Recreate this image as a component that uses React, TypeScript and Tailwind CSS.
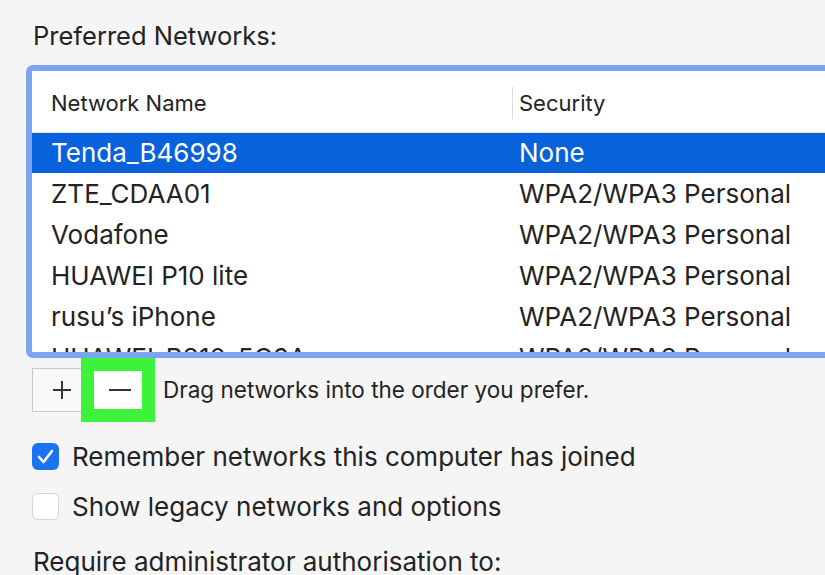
const networks = [
  { name: 'ZTE_CDAA01', security: 'WPA2/WPA3 Personal' },
  { name: 'Vodafone', security: 'WPA2/WPA3 Personal' },
  { name: 'HUAWEI P10 lite', security: 'WPA2/WPA3 Personal' },
  { name: 'rusu’s iPhone', security: 'WPA2/WPA3 Personal' },
  { name: 'HUAWEI-B310-5C6A', security: 'WPA2/WPA3 Personal' },
];

export default function App() {
  return (
    <div className="w-[825px] h-[575px] overflow-hidden bg-[#f5f5f5] text-[#232323] font-['Inter','Liberation_Sans',sans-serif]">
      <div className="pl-[33px] pt-[21px] h-[65px] text-[25.5px] leading-[30px]">Preferred Networks:</div>

      {/* network list */}
      <div className="ml-[26px] w-[840px] h-[293px] border-[6px] border-[#7ba6ef] rounded-[7px] bg-white overflow-hidden">
        <div className="h-[62px] flex items-center border-b border-[#dfe6f2] text-[22px] leading-[28px] pt-[3px]">
          <div className="w-[480px] pl-[19px]">Network Name</div>
          <div className="h-[32px] w-px bg-[#dcdcdc]" />
          <div className="pl-[6px]">Security</div>
        </div>
        <div className="h-[40px] flex items-center bg-[#0862dc] text-white text-[26px] leading-[32px]">
          <div className="w-[487px] pl-[19px]">Tenda_B46998</div>
          <div>None</div>
        </div>
        {networks.map((n) => (
          <div key={n.name} className="h-[41px] flex items-center text-[26px] leading-[32px] pt-[1px]">
            <div className="w-[487px] pl-[19px]">{n.name}</div>
            <div>{n.security}</div>
          </div>
        ))}
      </div>

      {/* add / remove */}
      <div className="flex items-center h-[64px]">
        <div className="ml-[32px] w-[60px] h-[44px] border border-[#c9c9c9] bg-[#f9f9f9] flex items-center pl-[19px]">
          <svg width="20" height="20" viewBox="0 0 20 20">
            <path d="M10 1v18M1 10h18" stroke="#333" strokeWidth="2" />
          </svg>
        </div>
        <div className="relative z-10 ml-[-11px] w-[74px] h-[64px] border-[13px] border-[#3cf23a] bg-white flex items-center justify-center">
          <svg width="22" height="4" viewBox="0 0 22 4" className="ml-[4px]">
            <path d="M0 2h22" stroke="#333" strokeWidth="2" />
          </svg>
        </div>
        <div className="ml-[8px] text-[22.5px] leading-[28px]">Drag networks into the order you prefer.</div>
      </div>

      {/* options */}
      <div className="mt-[9px] pl-[32px] flex flex-col">
        <div className="h-[50px] flex items-center gap-[13px]">
          <div className="w-[27px] h-[27px] rounded-[6px] bg-[#1a74f2] flex items-center justify-center">
            <svg width="17" height="15" viewBox="0 0 17 15">
              <path d="M2 8l4.5 5L15 2" fill="none" stroke="white" strokeWidth="2.6" strokeLinecap="round" strokeLinejoin="round" />
            </svg>
          </div>
          <div className="text-[26px] leading-[32px] pt-[1px]">Remember networks this computer has joined</div>
        </div>
        <div className="h-[50px] flex items-center gap-[13px]">
          <div className="w-[27px] h-[27px] rounded-[6px] bg-white border border-[#d4d4d4]" />
          <div className="text-[26px] leading-[32px] pt-[2px]">Show legacy networks and options</div>
        </div>
      </div>
      <div className="mt-[15px] pl-[33px] text-[26px] leading-[32px]">Require administrator authorisation to:</div>
    </div>
  );
}
